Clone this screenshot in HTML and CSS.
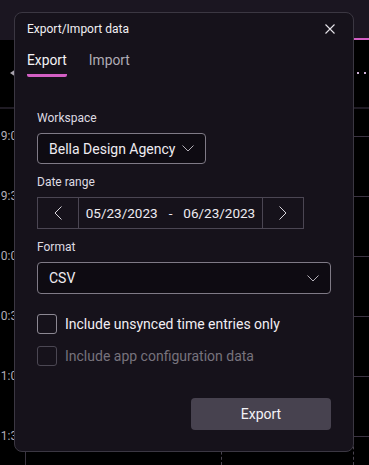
FILE: index.html
```html
<!DOCTYPE html>
<html lang="en">
<head>
  <meta charset="UTF-8" />
  <title>Export/Import data</title>
  <link rel="stylesheet" href="styles.css">
</head>
<body>
  <div id="app">
    <div class="topbar">
      <div class="top-tab"></div>
    </div>
    <div class="toolbar">
      <svg class="nav-arrow" width="6" height="8" viewBox="0 0 6 8"><path d="M0 4 L6 0 L6 8 Z" fill="#a9a4ae"/></svg>
      <div class="more-dots"><span></span><span></span><span></span></div>
    </div>
    <div class="grid">
      <div class="grid-row">
        <div class="time"><span>9:00</span></div>
        <div class="cell"></div><div class="cell dashed"></div><div class="cell dashed"></div>
      </div>
      <div class="grid-row">
        <div class="time"><span>9:30</span></div>
        <div class="cell"></div><div class="cell dashed"></div><div class="cell dashed"></div>
      </div>
      <div class="grid-row">
        <div class="time"><span>10:00</span></div>
        <div class="cell"></div><div class="cell dashed"></div><div class="cell dashed"></div>
      </div>
      <div class="grid-row">
        <div class="time"><span>10:30</span></div>
        <div class="cell"></div><div class="cell dashed"></div><div class="cell dashed"></div>
      </div>
      <div class="grid-row">
        <div class="time"><span>11:00</span></div>
        <div class="cell"></div><div class="cell dashed"></div><div class="cell dashed"></div>
      </div>
      <div class="grid-row">
        <div class="time"><span>11:30</span></div>
        <div class="cell"></div><div class="cell dashed"></div><div class="cell dashed"></div>
      </div>
    </div>
  </div>

  <div id="dialog">
    <div class="dialog-header">
      <span class="dialog-title">Export/Import data</span>
      <svg class="close-icon" width="10" height="10" viewBox="0 0 10 10"><path d="M0.5 0.5 L9.5 9.5 M9.5 0.5 L0.5 9.5" stroke="#e6e3e9" stroke-width="1.1"/></svg>
    </div>
    <div class="tabs">
      <div class="tab active">Export</div>
      <div class="tab">Import</div>
    </div>

    <div class="dialog-body">
      <div class="field-label">Workspace</div>
      <div class="select workspace">
        <span>Bella Design Agency</span>
        <svg width="12" height="7" viewBox="0 0 12 7"><path d="M0.5 0.5 L6 6 L11.5 0.5" fill="none" stroke="#b4b0b8" stroke-width="1"/></svg>
      </div>

      <div class="field-label">Date range</div>
      <div class="date-range">
        <div class="date-btn">
          <svg width="8" height="14" viewBox="0 0 8 14"><path d="M7.5 0.5 L1 7 L7.5 13.5" fill="none" stroke="#d8d5dc" stroke-width="1"/></svg>
        </div>
        <div class="date-text">
          <span>05/23/2023</span><span class="dash">-</span><span>06/23/2023</span>
        </div>
        <div class="date-btn">
          <svg width="8" height="14" viewBox="0 0 8 14"><path d="M0.5 0.5 L7 7 L0.5 13.5" fill="none" stroke="#d8d5dc" stroke-width="1"/></svg>
        </div>
      </div>

      <div class="field-label">Format</div>
      <div class="select format">
        <span>CSV</span>
        <svg width="12" height="7" viewBox="0 0 12 7"><path d="M0.5 0.5 L6 6 L11.5 0.5" fill="none" stroke="#b4b0b8" stroke-width="1"/></svg>
      </div>

      <label class="check">
        <span class="box"></span>
        <span>Include unsynced time entries only</span>
      </label>
      <label class="check disabled">
        <span class="box"></span>
        <span>Include app configuration data</span>
      </label>

      <div class="actions">
        <button class="export-btn">Export</button>
      </div>
    </div>
  </div>
</body>
</html>
```

FILE: styles.css
```css
html {
  overflow: hidden;
}

body {
  margin: 0;
  padding: 0;
  background-color: #000;
  font-family: Roboto, "Noto Sans", sans-serif;
  width: 369px;
  height: 465px;
  overflow: hidden;
  position: relative;
}

#app {
  height: 465px;
  overflow: hidden;
}

.topbar {
  height: 38px;
  background-color: #1b1621;
  display: flex;
  align-items: flex-end;
  justify-content: flex-end;
  border-bottom: 2px solid transparent;
}

.top-tab {
  width: 60px;
  height: 2px;
  margin-bottom: -2px;
  background-color: #d35fc4;
}

.toolbar {
  height: 67px;
  display: flex;
  align-items: center;
  justify-content: space-between;
  padding-left: 10px;
  border-bottom: 2px solid #1f1b24;
}

.nav-arrow {
  margin-top: -2px;
}

.more-dots {
  display: flex;
  gap: 5px;
  margin-right: 3px;
  margin-top: -2px;
}

.more-dots span {
  width: 2px;
  height: 2px;
  background-color: #cfb0d6;
}

.grid {
  padding-top: 27px;
}

.grid-row {
  display: flex;
  height: 60px;
}

.grid-row:last-child {
  height: 29px;
}

.time {
  width: 25px;
  flex-shrink: 0;
  display: flex;
  justify-content: flex-end;
  align-items: flex-start;
  border-right: 1px solid #3a3440;
  color: #b2acb8;
  font-size: 12px;
}

.time span {
  margin-top: -8px;
  line-height: 16px;
  padding-right: 1px;
  white-space: nowrap;
}

.cell {
  border-top: 1px solid #3b3342;
  width: 195px;
  flex-shrink: 0;
}

.cell.dashed {
  width: 131px;
  border-left: 1px dashed #4a4450;
}

.cell.dashed:last-child {
  flex: 1;
}

#dialog {
  position: absolute;
  left: 14px;
  top: 12px;
  width: 340px;
  height: 440px;
  box-sizing: border-box;
  background-color: #16121b;
  border: 1px solid #3b3742;
  border-radius: 8px;
  color: #ece9ef;
  display: flex;
  flex-direction: column;
}

.dialog-header {
  display: flex;
  justify-content: space-between;
  align-items: center;
  padding: 8px 18px 0 12px;
  height: 16px;
}

.dialog-title {
  font-size: 12px;
  line-height: 16px;
  color: #f1eff3;
}

.tabs {
  display: flex;
  gap: 22px;
  padding: 0 12px;
  margin-top: 13px;
}

.tab {
  font-size: 13.8px;
  line-height: 20px;
  padding-bottom: 4px;
  color: #b0acb5;
  border-bottom: 3px solid transparent;
}

.tab.active {
  color: #f4f2f6;
  border-bottom-color: #d35fc4;
  border-radius: 0 0 2px 2px;
}

.dialog-body {
  padding: 0 22px;
  display: flex;
  flex-direction: column;
}

.field-label {
  font-size: 12px;
  line-height: 16px;
  color: #dedbe2;
  margin-top: 10px;
  margin-bottom: 7px;
}

.dialog-body .field-label:first-child {
  margin-top: 33px;
}

.select {
  box-sizing: border-box;
  height: 31px;
  display: flex;
  align-items: center;
  justify-content: space-between;
  padding: 0 11px 0 11px;
  background-color: #0e0b12;
  border: 1px solid #7f7a86;
  border-radius: 4px;
  font-size: 14px;
  color: #eeebf1;
}

.select.workspace {
  width: 169px;
}

.select.format {
  height: 32px;
  margin-bottom: 20px;
}

.date-range {
  box-sizing: border-box;
  width: 267px;
  height: 32px;
  display: flex;
  border: 1px solid #4b4653;
}

.date-btn {
  width: 40px;
  display: flex;
  align-items: center;
  justify-content: center;
}

.date-text {
  flex: 1;
  display: flex;
  align-items: center;
  justify-content: center;
  gap: 11px;
  border-left: 1px solid #4b4653;
  border-right: 1px solid #4b4653;
  font-size: 13.5px;
  color: #eeebf1;
}

.check {
  display: flex;
  align-items: center;
  gap: 8px;
  height: 20px;
  font-size: 14px;
  color: #f1eef3;
  margin-bottom: 12px;
}

.check .box {
  box-sizing: border-box;
  width: 20px;
  height: 20px;
  border: 1px solid #8c8893;
  border-radius: 3px;
}

.check.disabled {
  color: #77737d;
}

.check.disabled .box {
  border-color: #4b4753;
}

.actions {
  display: flex;
  justify-content: flex-end;
  margin-top: 20px;
}

.export-btn {
  width: 140px;
  height: 32px;
  border: none;
  border-radius: 4px;
  background-color: #47424f;
  color: #f4f2f6;
  font-family: inherit;
  font-size: 14px;
}
```
